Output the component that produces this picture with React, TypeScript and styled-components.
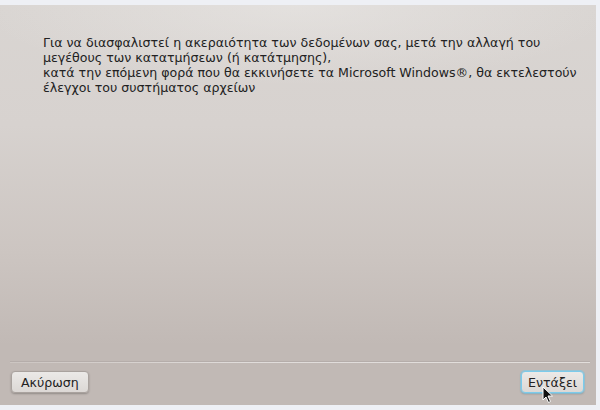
import React from 'react';
import styled, { createGlobalStyle } from 'styled-components';

const GlobalStyle = createGlobalStyle`
    html, body {
        margin: 0;
        padding: 0;
        background: #eef0f5;
        font-family: "DejaVu Sans", "Noto Sans", sans-serif;
    }
`;

const App = () => {
    return (
        <>
            <GlobalStyle />
            <Window>
                <Panel>
                    <Message>
                        Για να διασφαλιστεί η ακεραιότητα των δεδομένων σας, μετά την αλλαγή του
                        <br />
                        μεγέθους των κατατμήσεων (ή κατάτμησης),
                        <br />
                        κατά την επόμενη φορά που θα εκκινήσετε τα Microsoft Windows®, θα εκτελεστούν
                        <br />
                        έλεγχοι του συστήματος αρχείων
                    </Message>
                    <Separator />
                    <ButtonRow>
                        <Button>Ακύρωση</Button>
                        <Button $focused>Εντάξει</Button>
                    </ButtonRow>
                    <Cursor viewBox="0 0 12 18" width="12" height="18">
                        <path
                            d="M1 1 L1 14 L4 11 L6.5 16.5 L8.5 15.5 L6 10 L10.5 10 Z"
                            fill="#111"
                            stroke="#fff"
                            strokeWidth="1"
                            strokeLinejoin="round"
                        />
                    </Cursor>
                </Panel>
            </Window>
        </>
    );
};

export default App;

// Styled Components
const Window = styled.div`
    width: 600px;
    height: 410px;
    padding: 5px 4px 5px 0;
    box-sizing: border-box;
`;

const Panel = styled.div`
    position: relative;
    height: 400px;
    display: flex;
    flex-direction: column;
    background:
        radial-gradient(ellipse 320px 80px at 50% 0%, rgba(238, 236, 234, 0.5), rgba(238, 236, 234, 0) 100%),
        linear-gradient(#d9d5d2 0%, #d7d2cf 30%, #ccc5c1 62%, #c1b9b5 85%, #c1b9b5 100%);
`;

const Message = styled.div`
    flex: 1;
    padding: 30px 0 0 43px;
    font-size: 12.6px;
    line-height: 15px;
    color: #222;
    white-space: nowrap;
`;

const Separator = styled.div`
    height: 1px;
    margin: 0 6px 0 10px;
    background: linear-gradient(to right, rgba(230, 226, 223, 0.3), #e0dcda 40%, #e2dedb 100%);
    box-shadow: 0 -1px 0 rgba(160, 152, 148, 0.35);
`;

const ButtonRow = styled.div`
    display: flex;
    justify-content: space-between;
    align-items: center;
    padding: 8px 12px 12px 11px;
`;

const Button = styled.button<{ $focused?: boolean }>`
    height: 22px;
    padding: ${p => (p.$focused ? '0 6px' : '0 9px')};
    font-family: "DejaVu Sans", "Noto Sans", sans-serif;
    font-size: 12.6px;
    color: #222;
    background: linear-gradient(#ebe9e7, #dcd8d5);
    border: 1px solid ${p => (p.$focused ? '#7ccbeb' : '#a9a29e')};
    border-radius: 4px;
    box-shadow: ${p =>
        p.$focused
            ? '0 0 0 1px rgba(124, 203, 235, 0.6), 0 1px 2px rgba(0, 0, 0, 0.25)'
            : '0 1px 2px rgba(0, 0, 0, 0.25)'};
    cursor: pointer;
`;

const Cursor = styled.svg`
    position: absolute;
    left: 542px;
    top: 381px;
`;
